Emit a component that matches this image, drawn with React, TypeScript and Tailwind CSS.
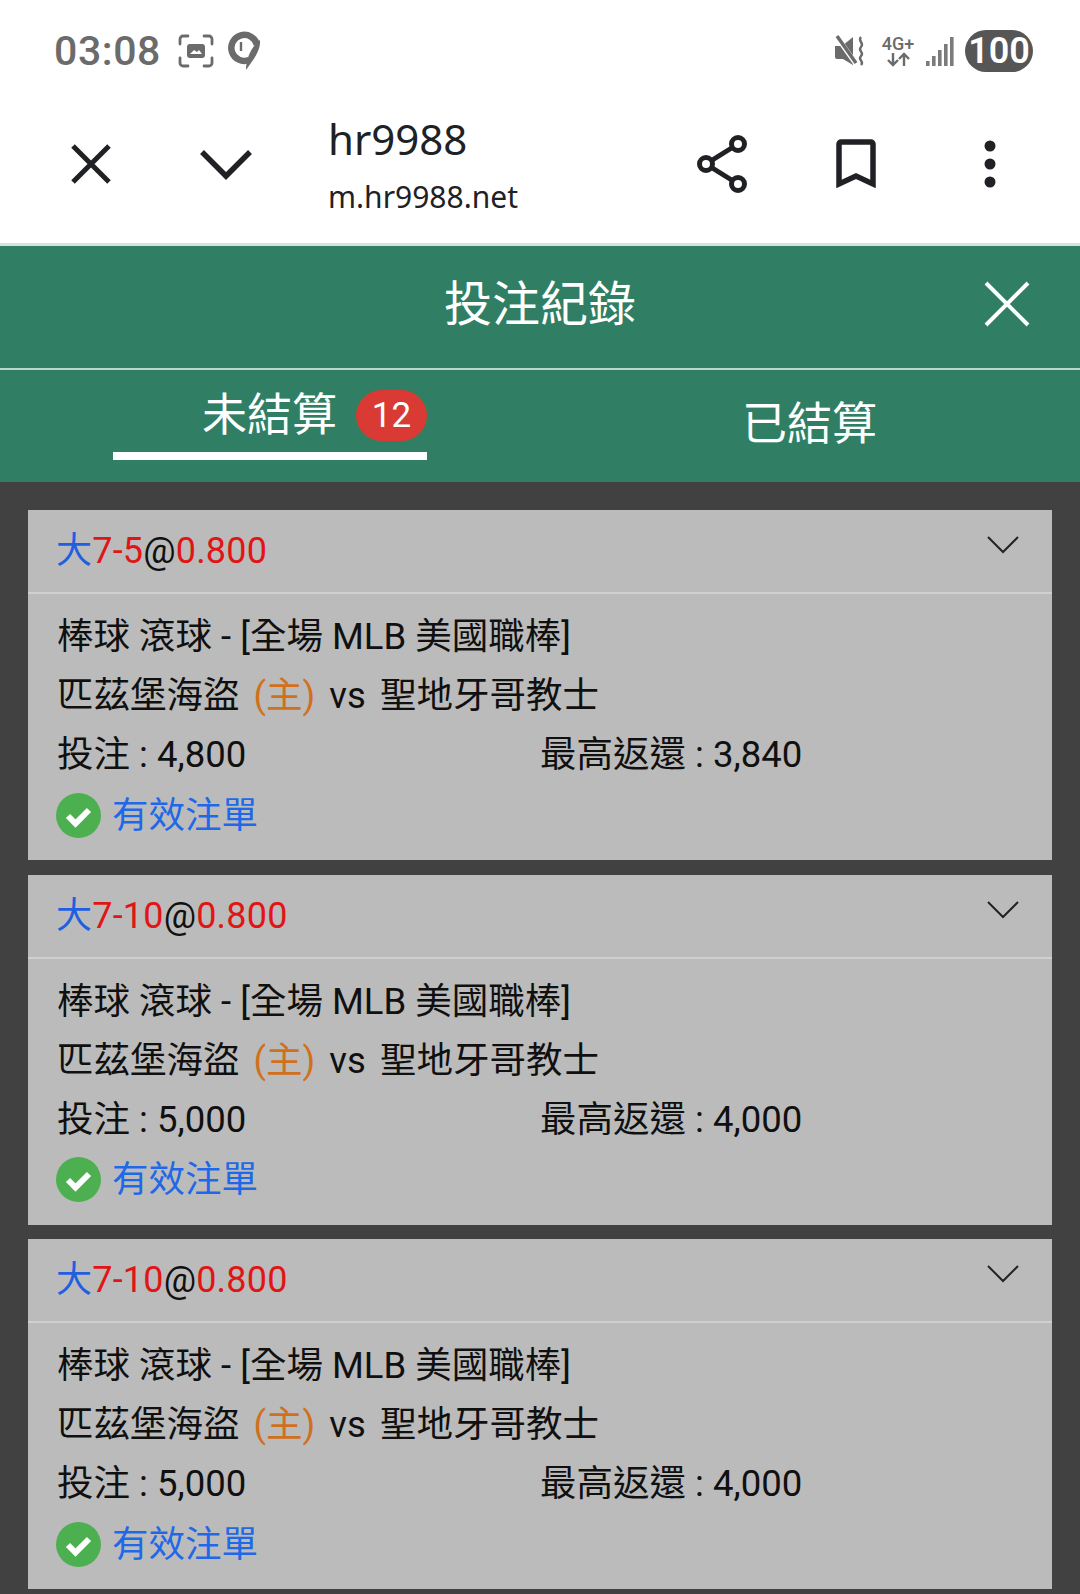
const font = "font-['Roboto','Noto_Sans_CJK_TC',sans-serif]";

const bets = [
  { line: "7-5", stake: "4,800", back: "3,840" },
  { line: "7-10", stake: "5,000", back: "4,000" },
  { line: "7-10", stake: "5,000", back: "4,000" },
];

function StatusBar() {
  return (
    <div className="flex h-[101px] items-center justify-between pl-[54px] pr-[47px] pt-[1px] text-[#6b6b6b]">
      <div className="flex items-center">
        <span className="text-[41px] font-medium leading-none tracking-[0.6px]">03:08</span>
        <svg className="ml-[17px] h-[36px] w-[36px]" viewBox="0 0 36 36" fill="none">
          <path d="M10 3H5a3 3 0 0 0-3 3v5M26 3h5a3 3 0 0 1 3 3v5M10 33H5a3 3 0 0 1-3-3v-5M26 33h5a3 3 0 0 0 3-3v-5" stroke="#6b6b6b" strokeWidth="2.8" strokeLinecap="round" />
          <rect x="9" y="11" width="18" height="14" rx="3" fill="#6b6b6b" />
          <path d="M12 21l4-4 3 2 2-2 3 4z" fill="#fff" />
        </svg>
        <svg className="ml-[11px] h-[40px] w-[36px]" viewBox="0 0 36 40" fill="none">
          <path d="M24 29a13 13 0 1 1 8-15" stroke="#6b6b6b" strokeWidth="6.5" />
          <path d="M35 9c1 11-7 20-14 30 0-11 5-23 14-30z" fill="#6b6b6b" />
          <path d="M16 11v9" stroke="#6b6b6b" strokeWidth="2.4" />
        </svg>
      </div>
      <div className="flex items-center">
        <svg className="h-[34px] w-[32px]" viewBox="0 0 32 34" fill="none">
          <path d="M1 12h7l11-9v28L9 25H3a2 2 0 0 1-2-2z" fill="#6b6b6b" />
          <path d="M3 3l19 27" stroke="#fff" strokeWidth="5" />
          <path d="M3 2l19 27" stroke="#6b6b6b" strokeWidth="3.4" />
          <path d="M27 3c-4 4 4 6 0 10s4 5 0 9 4 5 0 9" stroke="#6b6b6b" strokeWidth="2.4" />
        </svg>
        <div className="ml-[15px] flex w-[34px] flex-col items-center">
          <span className="text-[18px] font-medium leading-[17px]">4G+</span>
          <svg className="h-[15px] w-[26px]" viewBox="0 0 26 15" fill="none" stroke="#6b6b6b" strokeWidth="2.4">
            <path d="M8 1v12M3 8l5 5 5-5M19 14V2M14 7l5-5 5 5" />
          </svg>
        </div>
        <svg className="ml-[11px] h-[30px] w-[28px]" viewBox="0 0 28 30" fill="#7b7b7b">
          <rect x="0" y="25" width="3.6" height="5" />
          <rect x="6" y="20" width="3.6" height="10" />
          <rect x="12" y="14" width="3.6" height="16" />
          <rect x="18" y="8" width="3.6" height="22" />
          <rect x="24" y="1" width="3.6" height="29" />
        </svg>
        <span className="ml-[11px] flex h-[42px] w-[68px] items-center justify-center rounded-full bg-[#565656] text-[36px] font-semibold leading-none text-white">
          100
        </span>
      </div>
    </div>
  );
}

function BrowserBar() {
  return (
    <div className="flex h-[145px] items-center border-b-[3px] border-[#d5e3de] pb-[16px] text-[#202124]">
      <div className="flex w-[156px] justify-center pl-[50px] pr-[25px]">
        <svg className="h-[40px] w-[40px]" viewBox="0 0 40 40" fill="none" stroke="#202124" strokeWidth="5">
          <path d="M2 2l36 36M38 2L2 38" />
        </svg>
      </div>
      <div className="flex w-[172px] pl-[44px]">
        <svg className="h-[32px] w-[52px]" viewBox="0 0 52 32" fill="none" stroke="#202124" strokeWidth="5.5">
          <path d="M2 4l24 24L50 4" />
        </svg>
      </div>
      <div className="flex flex-1 flex-col font-['Noto_Sans',sans-serif]">
        <span className="text-[42px] leading-[54px]">hr9988</span>
        <span className="mt-[12px] text-[30px] leading-[38px]">m.hr9988.net</span>
      </div>
      <svg className="h-[58px] w-[52px]" viewBox="0 0 52 58" fill="none" stroke="#202124" strokeWidth="5">
        <path d="M42 9L10 29l32 20" />
        <circle cx="42" cy="9" r="6.5" fill="#fff" />
        <circle cx="10" cy="29" r="6.5" fill="#fff" />
        <circle cx="42" cy="49" r="6.5" fill="#fff" />
      </svg>
      <svg className="ml-[88px] h-[50px] w-[40px]" viewBox="0 0 40 50" fill="none" stroke="#202124" strokeWidth="5.5">
        <path d="M3 45V5a2 2 0 0 1 2-2h30a2 2 0 0 1 2 2v40l-17-8z" />
      </svg>
      <svg className="ml-[108px] mr-[84px] h-[48px] w-[12px]" viewBox="0 0 12 48" fill="#202124">
        <circle cx="6" cy="6" r="5.5" />
        <circle cx="6" cy="24" r="5.5" />
        <circle cx="6" cy="42" r="5.5" />
      </svg>
    </div>
  );
}

function Tabs() {
  return (
    <div className="flex h-[112px] bg-[#307f64] text-white">
      <div className="ml-[113px] flex h-[90px] w-[314px] items-center justify-end border-b-[8px] border-white pt-[8px]">
        <span className="text-[45px] leading-none">未結算</span>
        <span className="ml-[19px] flex h-[51px] w-[71px] items-center justify-center rounded-full bg-[#d93a34] text-[35px] leading-none">
          12
        </span>
      </div>
      <div className="ml-[315px] mt-[27px] text-[45px] leading-[56px]">已結算</div>
    </div>
  );
}

function BetCard({ line, stake, back }: { line: string; stake: string; back: string }) {
  return (
    <div className="h-[350px] bg-[#bbbbbb] text-[36.5px] leading-[59px] text-[#101010]">
      <div className="flex h-[84px] items-start justify-between border-b-[2px] border-[#d0d0d0] pl-[28px] pr-[33px] pt-[12px] text-[36px]">
        <div className="tracking-[0.2px]">
          <span className="text-[#1f5fe0]">大</span>
          <span className="text-[#e01515]">{line}</span>
          @<span className="text-[#e01515]">0.800</span>
        </div>
        <svg className="mt-[14px] h-[18px] w-[32px]" viewBox="0 0 32 18" fill="none" stroke="#222" strokeWidth="2">
          <path d="M1 1l15 15L31 1" />
        </svg>
      </div>
      <div className="pl-[29px] pt-[13px]">
        <div>棒球 滾球 - [全場 MLB 美國職棒]</div>
        <div className="[word-spacing:5px]">
          匹茲堡海盜 <span className="text-[#d0701c]">(主)</span> vs 聖地牙哥教士
        </div>
        <div className="flex">
          <div className="w-[483px]">投注 : {stake}</div>
          <div>最高返還 : {back}</div>
        </div>
        <div className="mt-[1px] flex h-[60px] items-center text-[#1f68e8]">
          <svg className="ml-[-1px] h-[45px] w-[45px]" viewBox="0 0 45 45">
            <circle cx="22.5" cy="22.5" r="22.5" fill="#4caf50" />
            <path d="M12 23l7.5 7.5L33 17" fill="none" stroke="#fff" strokeWidth="6" />
          </svg>
          <span className="ml-[11px]">有效注單</span>
        </div>
      </div>
    </div>
  );
}

export default function App() {
  return (
    <div className={`flex h-[1594px] w-[1080px] flex-col overflow-hidden bg-white ${font}`}>
      <StatusBar />
      <BrowserBar />
      <div className="relative flex h-[122px] shrink-0 items-center justify-center bg-[#307f64] pb-[4px] text-[48px] text-white">
        投注紀錄
        <svg className="absolute right-[50px] top-[35px] h-[46px] w-[46px]" viewBox="0 0 46 46" fill="none" stroke="#fff" strokeWidth="4">
          <path d="M2 2l42 42M44 2L2 44" />
        </svg>
      </div>
      <div className="h-[2px] shrink-0 bg-[#bcd8cd]" />
      <Tabs />
      <div className="flex flex-1 flex-col gap-[14.6px] bg-[#414141] px-[28px] pt-[28px]">
        {bets.map((bet, i) => (
          <BetCard key={i} {...bet} />
        ))}
      </div>
    </div>
  );
}
